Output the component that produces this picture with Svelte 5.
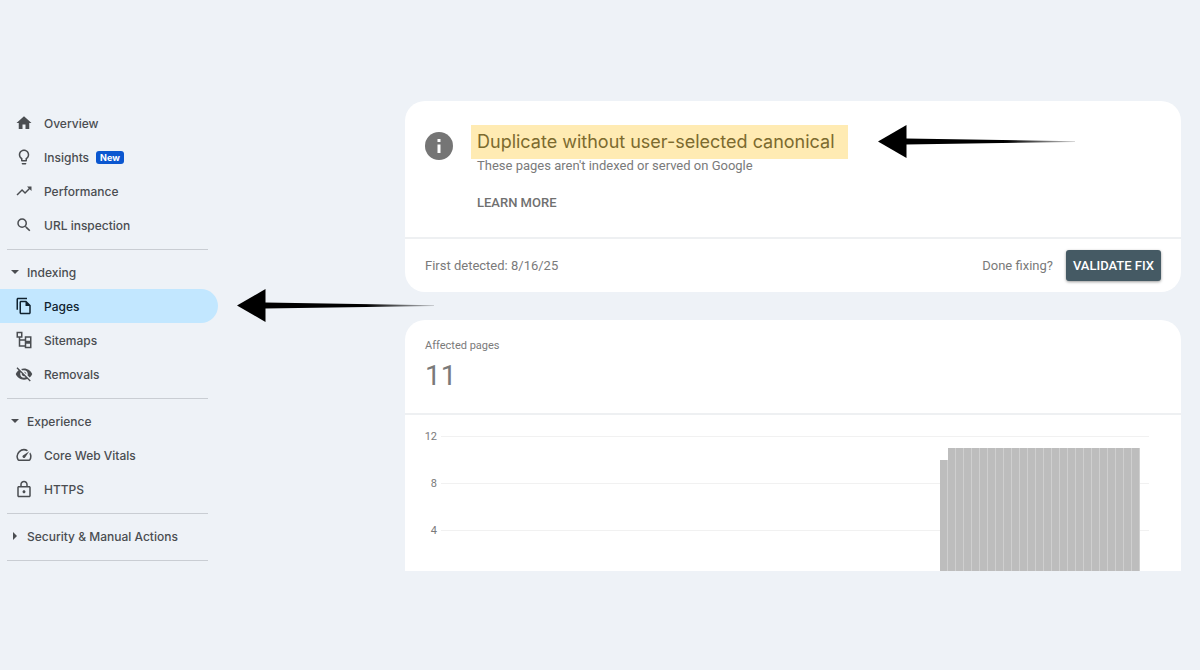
<script lang="ts">
  type Item = { label: string; icon: string; badge?: string; active?: boolean };
  type Group = { title?: string; open?: boolean; items: Item[] };

  const groups: Group[] = [
    {
      items: [
        { label: 'Overview', icon: 'home' },
        { label: 'Insights', icon: 'bulb', badge: 'New' },
        { label: 'Performance', icon: 'trend' },
        { label: 'URL inspection', icon: 'search' },
      ],
    },
    {
      title: 'Indexing',
      open: true,
      items: [
        { label: 'Pages', icon: 'pages', active: true },
        { label: 'Sitemaps', icon: 'sitemap' },
        { label: 'Removals', icon: 'hidden' },
      ],
    },
    {
      title: 'Experience',
      open: true,
      items: [
        { label: 'Core Web Vitals', icon: 'speed' },
        { label: 'HTTPS', icon: 'lock' },
      ],
    },
    { title: 'Security & Manual Actions', open: false, items: [] },
  ];

  // 24x24 icon paths
  const icons: Record<string, string> = {
    home: 'M10 20v-6h4v6h5v-8h3L12 3 2 12h3v8z',
    bulb: 'M9 21c0 .55.45 1 1 1h4c.55 0 1-.45 1-1v-1H9v1zm3-19C8.14 2 5 5.14 5 9c0 2.38 1.19 4.47 3 5.74V17c0 .55.45 1 1 1h6c.55 0 1-.45 1-1v-2.26c1.81-1.27 3-3.36 3-5.74 0-3.86-3.14-7-7-7zm2.85 11.1l-.85.6V16h-4v-2.3l-.85-.6A4.997 4.997 0 0 1 7 9c0-2.76 2.24-5 5-5s5 2.24 5 5c0 1.63-.8 3.16-2.15 4.1z',
    trend: 'M16 6l2.29 2.29-4.88 4.88-4-4L2 16.59 3.41 18l6-6 4 4 6.3-6.29L22 12V6z',
    search: 'M15.5 14h-.79l-.28-.27A6.47 6.47 0 0 0 16 9.5 6.5 6.5 0 1 0 9.5 16c1.61 0 3.09-.59 4.23-1.57l.27.28v.79l5 4.99L20.49 19l-4.99-5zm-6 0C7.01 14 5 11.99 5 9.5S7.01 5 9.5 5 14 7.01 14 9.5 11.99 14 9.5 14z',
    pages: 'M16 1H4c-1.1 0-2 .9-2 2v14h2V3h12V1zm-1 4H8c-1.1 0-1.99.9-1.99 2L6 21c0 1.1.89 2 1.99 2H19c1.1 0 2-.9 2-2V11l-6-6zM8 21V7h6v5h5v9H8z',
    sitemap: 'M2 1v8h3v12h8v2h9v-8h-9v4H7v-6h6v2h9V7h-9v4H7V9h3V1H2zm2 2h4v4H4V3zm11 6h5v4h-5V9zm0 8h5v4h-5v-4z',
    hidden: 'M12 7c2.76 0 5 2.24 5 5 0 .65-.13 1.26-.36 1.83l2.92 2.92c1.51-1.26 2.7-2.89 3.43-4.75-1.73-4.39-6-7.5-11-7.5-1.4 0-2.74.25-3.98.7l2.16 2.16C10.74 7.13 11.35 7 12 7zM2 4.27l2.28 2.28.46.46A11.8 11.8 0 0 0 1 12c1.73 4.39 6 7.5 11 7.5 1.55 0 3.03-.3 4.38-.84l.42.42L19.73 22 21 20.73 3.27 3 2 4.27zM7.53 9.8l1.55 1.55c-.05.21-.08.43-.08.65 0 1.66 1.34 3 3 3 .22 0 .44-.03.65-.08l1.55 1.55c-.67.33-1.41.53-2.2.53-2.76 0-5-2.24-5-5 0-.79.2-1.53.53-2.2zm4.31-.78l3.15 3.15.02-.16c0-1.66-1.34-3-3-3l-.17.01z',
    speed: 'M20.38 8.57l-1.23 1.85a8 8 0 0 1-.22 7.58H5.07A8 8 0 0 1 15.58 6.85l1.85-1.23A10 10 0 0 0 3.35 19a2 2 0 0 0 1.72 1h13.85a2 2 0 0 0 1.74-1 10 10 0 0 0-.27-10.44zm-9.79 6.84a2 2 0 0 0 2.83 0l5.66-8.49-8.49 5.66a2 2 0 0 0 0 2.83z',
    lock: 'M19 8h-2V6c0-2.76-2.24-5-5-5S7 3.240 7 6v2H5c-1.1 0-2 .9-2 2v11c0 1.100.9 2 2 2h14c1.100 0 2-.9 2-2V10c0-1.100-.9-2-2-2zM9 6c0-1.660 1.340-3 3-3s3 1.340 3 3v2H9V6zm10 15H5V10h14v11zm-7-3.500c1.100 0 2-.9 2-2s-.9-2-2-2-2 .9-2 2 .9 2 2 2z',
  };

  const max = 12;
  const ticks = [12, 8, 4];
  const counts = [10, ...Array(24).fill(11)];
</script>

{#snippet arrow(id: string)}
  <svg class="arrow" viewBox="0 0 197 33" aria-hidden="true">
    <defs>
      <linearGradient {id}>
        <stop offset="0.6" stop-color="#000" />
        <stop offset="1" stop-color="#000" stop-opacity="0.2" />
      </linearGradient>
    </defs>
    <path d="M0 16.5L28.5 0V33z" />
    <path d="M28 13.5L197 16.2V17L28 19.5z" fill="url(#{id})" />
  </svg>
{/snippet}

<div class="page">
  <nav class="sidebar">
    {#each groups as group}
      <div class="group">
        {#if group.title}
          <button class="row heading" aria-expanded={group.open}>
            <svg class="caret" class:closed={!group.open} viewBox="0 0 8 8">
              <path d="M0 2h8L4 6z" />
            </svg>
            {group.title}
          </button>
        {/if}
        {#each group.items as item}
          <div class="item">
            <a class="row" class:active={item.active} href="#{item.icon}">
              <svg class="icon" viewBox="0 0 24 24"><path d={icons[item.icon]} /></svg>
              {item.label}
              {#if item.badge}<span class="badge">{item.badge}</span>{/if}
            </a>
            {#if item.active}{@render arrow('fade-nav')}{/if}
          </div>
        {/each}
      </div>
    {/each}
  </nav>

  <main>
    <section class="card">
      <div class="issue">
        <svg class="info" viewBox="0 0 28 28">
          <circle cx="14" cy="14" r="14" />
          <path d="M12.5 7h3v3h-3zM12.5 12.5h3V21h-3z" fill="#fff" />
        </svg>
        <div class="issue-text">
          <div class="title">
            <h1>Duplicate without user-selected canonical</h1>
            {@render arrow('fade-title')}
          </div>
          <p>These pages aren't indexed or served on Google</p>
          <a class="learn" href="#learn">LEARN MORE</a>
        </div>
      </div>
      <div class="actions">
        <span>First detected: 8/16/25</span>
        <span class="done">Done fixing?</span>
        <button class="validate">VALIDATE FIX</button>
      </div>
    </section>

    <section class="card cut">
      <div class="summary">
        <div class="label">Affected pages</div>
        <div class="total">11</div>
      </div>
      <div class="chart">
        {#each ticks as tick}
          <div class="tick"><span>{tick}</span></div>
        {/each}
        <div class="bars">
          {#each counts as count}
            <div class="bar" style="height: {(count / max) * 100}%"></div>
          {/each}
        </div>
      </div>
    </section>
  </main>
</div>

<style>
  :global(body) {
    margin: 0;
    background: #eef2f7;
  }

  .page {
    display: flex;
    align-items: flex-start;
    padding: 101px 19px 99px 0;
    font-family: Roboto, 'Liberation Sans', sans-serif;
    color: #7a7a7a;
  }

  .sidebar {
    width: 218px;
    flex-shrink: 0;
    padding-top: 5px;
    font-family: Inter, Roboto, sans-serif;
  }

  .group::after {
    content: '';
    display: block;
    height: 1px;
    margin: 7px 10px 5px 7px;
    background: #c9cdd3;
  }

  .item {
    position: relative;
  }

  .row {
    display: flex;
    align-items: center;
    box-sizing: border-box;
    width: 100%;
    height: 34px;
    padding: 0 15px;
    border-radius: 0 17px 17px 0;
    color: #4a4d51;
    font-size: 12px;
    font-weight: 500;
    text-decoration: none;
  }

  .heading {
    padding: 0 11px;
    border: none;
    background: none;
    font-family: inherit;
    text-align: left;
    cursor: pointer;
  }

  .active {
    background: #c2e7ff;
    color: #10222f;
  }

  .icon {
    width: 18px;
    height: 18px;
    margin-right: 11px;
    fill: currentColor;
  }

  .caret {
    width: 8px;
    height: 8px;
    margin-right: 8px;
    fill: currentColor;
  }

  .closed {
    transform: rotate(-90deg);
  }

  .badge {
    margin-left: 7px;
    padding: 0 4px;
    border-radius: 3px;
    background: #0b57d0;
    color: #fff;
    font-size: 9px;
    font-weight: 700;
    line-height: 13px;
  }

  .arrow {
    position: absolute;
    left: calc(100% + 19px);
    top: 0;
    width: 197px;
    height: 33px;
    z-index: 1;
  }

  main {
    flex: 1;
    min-width: 0;
    margin-left: 187px;
  }

  .card {
    border-radius: 20px;
    background: #fff;
  }

  .issue {
    display: flex;
    padding: 24px 20px;
  }

  .info {
    width: 28px;
    height: 28px;
    margin-top: 7px;
    flex-shrink: 0;
    fill: #757575;
  }

  .issue-text {
    margin-left: 18px;
  }

  .title {
    position: relative;
    width: fit-content;
  }

  .title .arrow {
    left: calc(100% + 30px);
  }

  h1 {
    box-sizing: border-box;
    min-width: 377px;
    margin: 0;
    padding: 0 6px;
    background: #ffebb3;
    color: #7c6a2e;
    font-family: Inter, Roboto, sans-serif;
    font-size: 18px;
    font-weight: 400;
    line-height: 34px;
  }

  p {
    margin: 0 0 20px;
    padding-left: 6px;
    font-size: 13px;
    line-height: 14px;
  }

  .learn {
    display: block;
    padding-left: 6px;
    color: #707070;
    font-size: 13px;
    font-weight: 500;
    line-height: 20px;
    text-decoration: none;
  }

  .actions {
    display: flex;
    align-items: center;
    padding: 11px 20px;
    border-top: 2px solid #eef0f2;
    font-size: 13px;
  }

  .done {
    margin-left: auto;
  }

  .validate {
    height: 31px;
    margin-left: 13px;
    padding: 0 7px;
    border: none;
    border-radius: 3px;
    background: #455a64;
    box-shadow: 0 1px 3px rgba(0, 0, 0, 0.4);
    color: #fff;
    font-family: inherit;
    font-size: 13px;
    font-weight: 500;
    cursor: pointer;
  }

  .cut {
    margin-top: 28px;
    border-radius: 20px 20px 0 0;
  }

  .summary {
    padding: 18px 20px;
    border-bottom: 2px solid #eef0f2;
  }

  .label {
    font-size: 11px;
    line-height: 16px;
  }

  .total {
    padding: 4px 0 1px;
    font-size: 28px;
    line-height: 36px;
  }

  .chart {
    position: relative;
    height: 135px;
    margin: 0 32px 0 18px;
    padding-top: 21px;
    overflow: hidden;
  }

  .tick {
    display: flex;
    align-items: flex-start;
    height: 47px;
  }

  .tick span {
    width: 14px;
    margin: -6px 4px 0 0;
    font-size: 11px;
    line-height: 13px;
    text-align: right;
  }

  .tick::after {
    content: '';
    flex: 1;
    height: 1px;
    background: #f1f1f1;
  }

  .bars {
    position: absolute;
    right: 9px;
    top: 21px;
    display: flex;
    align-items: flex-end;
    height: 141px;
  }

  .bar {
    box-sizing: border-box;
    width: 8px;
    border-right: 1px solid #cfcfcf;
    background: #bdbdbd;
  }
</style>
